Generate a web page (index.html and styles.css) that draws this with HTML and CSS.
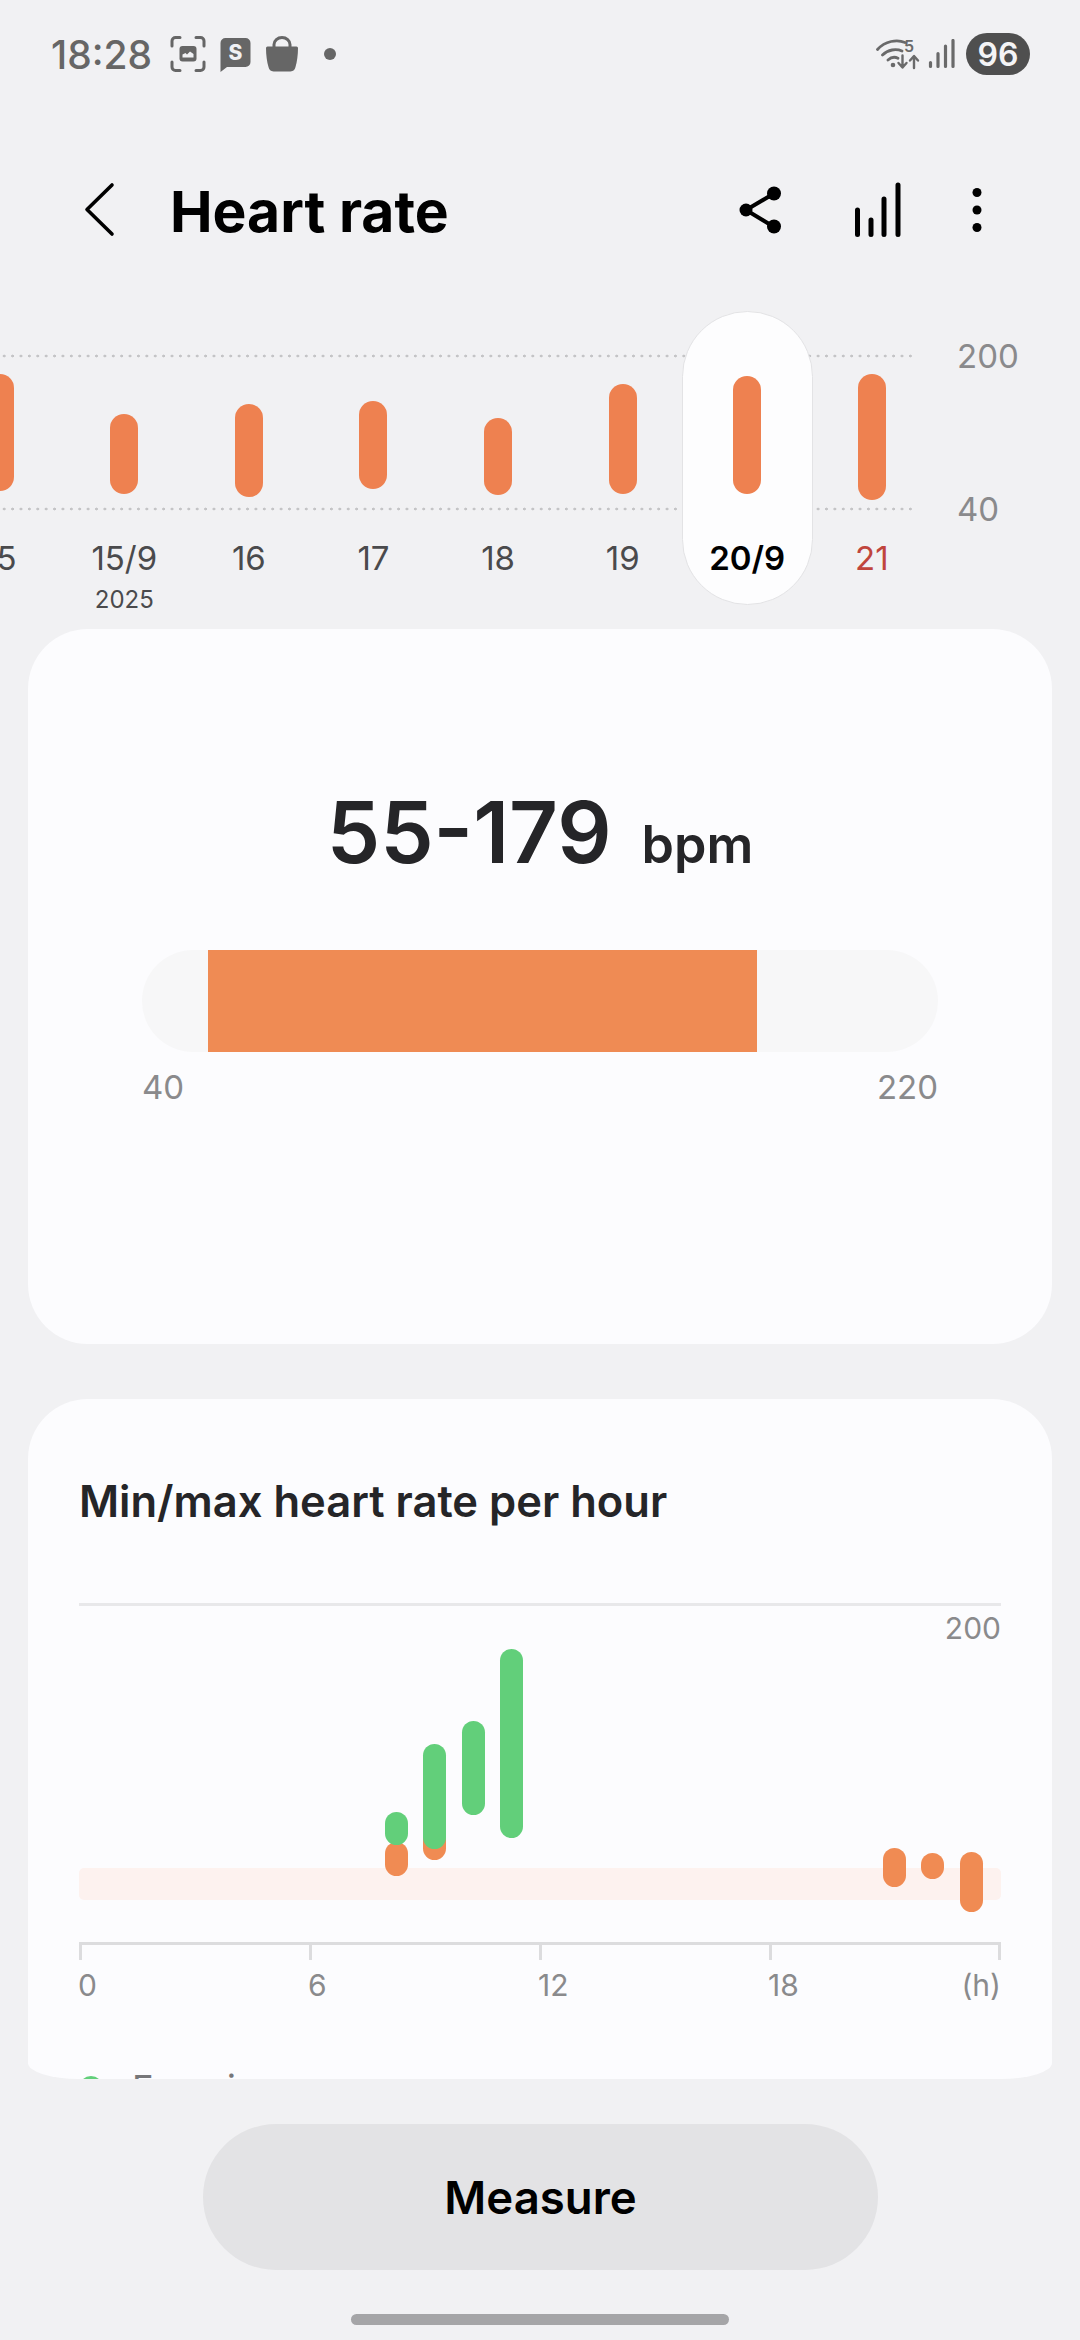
FILE: index.html
```html
<!DOCTYPE html>
<html lang="en">
  <head>
    <meta charset="UTF-8" />
    <meta name="viewport" content="width=device-width, initial-scale=1.0" />
    <title>Heart rate</title>
    <link rel="stylesheet" href="styles.css">
  </head>
  <body>

    <!-- status bar -->
    <div class="status-bar">
      <span class="clock">18:28</span>
      <svg class="st-icon shot" width="36" height="36" viewBox="0 0 36 36">
        <path d="M2 10V5a3.500 3.500 0 0 1 3.500-3.500H10M26 1.500h4.500A3.500 3.500 0 0 1 34 5v5M34 26v5a3.500 3.500 0 0 1-3.500 3.500H26M10 34.500H5.500A3.500 3.500 0 0 1 2 31v-5" fill="none" stroke="#666" stroke-width="3" stroke-linecap="round"/>
        <rect x="9.500" y="10" width="17" height="15.500" rx="3" fill="#666"/>
        <path d="M12.500 21.500v-3l3-1.500 1.500 1.500 3-3 3.500 2.500v3.500z" fill="#f0f1f4"/>
      </svg>
      <svg class="st-icon bubble" width="31" height="35" viewBox="0 0 31 35">
        <path d="M0.500 6a5 5 0 0 1 5-5h20a5 5 0 0 1 5 5v19a5 5 0 0 1-5 5H7l-6.500 5z" fill="#666"/>
        <text x="15.500" y="22.500" text-anchor="middle" class="bubble-s">S</text>
      </svg>
      <svg class="st-icon bag" width="34" height="36" viewBox="0 0 34 36">
        <path d="M9 11V8.500a8 7 0 0 1 16 0V11" fill="none" stroke="#666" stroke-width="3"/>
        <path d="M1 12a1.500 1.500 0 0 1 1.500-1.500h29a1.500 1.500 0 0 1 1.500 1.500c0 7-1 14-2.500 19a5.500 5.500 0 0 1-5 4.500h-17a5.500 5.500 0 0 1-5-4.500C2 26 1 19 1 12z" fill="#666"/>
      </svg>
      <span class="st-dot"></span>

      <svg class="wifi" width="44" height="32" viewBox="0 0 44 32">
        <path d="M1.500 11.500C9 3 21 1 29 4.500M6.500 17C12 11.500 20 10.500 26 13M12 22c3-2.800 7-3.300 10-1.800" fill="none" stroke="#6a6a6a" stroke-width="2.800" stroke-linecap="round"/>
        <circle cx="17" cy="27" r="2.300" fill="#6a6a6a"/>
        <text x="33" y="13.500" text-anchor="middle" class="wifi-5">5</text>
        <path d="M26.500 17.500v11M22.500 25l4 4.500 4-4.500M38 30V19M34 22.500l4-4.500 4 4.500" fill="none" stroke="#6a6a6a" stroke-width="2.400" stroke-linecap="round" stroke-linejoin="round"/>
      </svg>
      <svg class="signal" width="28" height="30" viewBox="0 0 28 30">
        <path d="M2.500 27.500v-4M10 27.500v-13M17.500 27.500V7M25 27.500V1.500" fill="none" stroke="#6a6a6a" stroke-width="3.200" stroke-linecap="round"/>
      </svg>
      <span class="battery">96</span>
    </div>

    <!-- title bar -->
    <div class="top-bar">
      <svg class="back" width="32" height="56" viewBox="0 0 32 56">
        <path d="M28 3 3 27.500 28 52" fill="none" stroke="#000" stroke-width="3.600" stroke-linecap="round" stroke-linejoin="round"/>
      </svg>
      <h1 class="page-title">Heart rate</h1>
      <div class="top-actions">
        <svg width="50" height="50" viewBox="0 0 50 50">
          <path d="M38 8.500 10 25l28 17" fill="none" stroke="#000" stroke-width="4"/>
          <circle cx="38" cy="8.500" r="7"/>
          <circle cx="10" cy="25" r="6.500"/>
          <circle cx="38" cy="41.500" r="7"/>
        </svg>
        <svg width="52" height="56" viewBox="0 0 52 56">
          <path d="M5.500 52.500V28M19 52.500V38M32 52.500V17M46 52.500V3" fill="none" stroke="#000" stroke-width="5" stroke-linecap="round"/>
        </svg>
        <svg width="14" height="50" viewBox="0 0 14 50">
          <circle cx="7" cy="7.500" r="4.500"/>
          <circle cx="7" cy="25" r="4.500"/>
          <circle cx="7" cy="42.500" r="4.500"/>
        </svg>
      </div>
    </div>

    <!-- days strip -->
    <div class="week">
      <div class="grid-line line-max"></div>
      <div class="grid-line line-min"></div>
      <span class="week-axis axis-max">200</span>
      <span class="week-axis axis-min">40</span>

      <div class="days">
        <div class="day">
          <div class="day-plot"><div class="day-bar" style="margin-top:63px;height:117px"></div></div>
          <div class="day-label">15</div>
        </div>
        <div class="day">
          <div class="day-plot"><div class="day-bar" style="margin-top:103px;height:80px"></div></div>
          <div class="day-label">15/9</div>
          <div class="day-year">2025</div>
        </div>
        <div class="day">
          <div class="day-plot"><div class="day-bar" style="margin-top:93px;height:93px"></div></div>
          <div class="day-label">16</div>
        </div>
        <div class="day">
          <div class="day-plot"><div class="day-bar" style="margin-top:90px;height:88px"></div></div>
          <div class="day-label">17</div>
        </div>
        <div class="day">
          <div class="day-plot"><div class="day-bar" style="margin-top:107px;height:77px"></div></div>
          <div class="day-label">18</div>
        </div>
        <div class="day">
          <div class="day-plot"><div class="day-bar" style="margin-top:73px;height:110px"></div></div>
          <div class="day-label">19</div>
        </div>
        <div class="day selected">
          <div class="day-plot"><div class="day-bar" style="margin-top:65px;height:118px"></div></div>
          <div class="day-label">20/9</div>
        </div>
        <div class="day sunday">
          <div class="day-plot"><div class="day-bar" style="margin-top:63px;height:126px"></div></div>
          <div class="day-label">21</div>
        </div>
      </div>
    </div>

    <!-- scrolling cards -->
    <div class="cards">
      <section class="card summary">
        <div class="reading">
          <span class="reading-value">55-179</span>
          <span class="reading-unit">bpm</span>
        </div>
        <div class="range-track">
          <div class="range-fill" style="margin-left:66px;width:549px"></div>
        </div>
        <div class="range-labels">
          <span>40</span>
          <span>220</span>
        </div>
      </section>

      <section class="card hourly">
        <h2 class="card-title">Min/max heart rate per hour</h2>
        <div class="plot">
          <span class="plot-max">200</span>
          <div class="plot-band"></div>
          <span class="h-bar orange" style="left:306px;top:236px;height:34px"></span>
          <span class="h-bar green" style="left:306px;top:206px;height:33px"></span>
          <span class="h-bar orange" style="left:344px;top:218px;height:36px"></span>
          <span class="h-bar green" style="left:344px;top:138px;height:105px"></span>
          <span class="h-bar green" style="left:383px;top:115px;height:94px"></span>
          <span class="h-bar green" style="left:421px;top:43px;height:189px"></span>
          <span class="h-bar orange" style="left:804px;top:242px;height:39px"></span>
          <span class="h-bar orange" style="left:842px;top:247px;height:26px"></span>
          <span class="h-bar orange" style="left:881px;top:246px;height:60px"></span>
        </div>
        <div class="hours">
          <div class="hour"><i class="tick"></i><span>0</span></div>
          <div class="hour"><i class="tick"></i><span>6</span></div>
          <div class="hour"><i class="tick"></i><span>12</span></div>
          <div class="hour"><i class="tick"></i><span>18</span></div>
          <div class="hour last"><i class="tick"></i><span>(h)</span></div>
        </div>
        <div class="legend">
          <span class="legend-dot"></span>
          <span class="legend-text">Exercise</span>
        </div>
      </section>
    </div>

    <button type="button" class="measure">Measure</button>
    <div class="home-bar"></div>

  </body>
</html>
```

FILE: styles.css
```css
/* General */
html,
body {
  margin: 0;
  padding: 0;
}

body {
  width: 1080px;
  height: 2340px;
  overflow: hidden;
  display: flex;
  flex-direction: column;
  font-family: Inter, "Liberation Sans", sans-serif;
  background-color: #f1f1f3;
}

/* Status bar */
.status-bar {
  height: 108px;
  flex: none;
  display: flex;
  align-items: center;
  padding: 0 50px 0 51px;
  box-sizing: border-box;
  color: #666666;
}

.clock {
  font-size: 39px;
  font-weight: 500;
  width: 119px;
}

.st-icon {
  flex: none;
  margin-right: 14px;
}

.bubble-s {
  font-size: 21px;
  font-weight: 800;
  fill: #f0f1f4;
}

.st-dot {
  width: 12px;
  height: 12px;
  margin-left: 11px;
  border-radius: 50%;
  background-color: #666666;
}

.wifi {
  margin-left: auto;
  margin-right: 8px;
}

.wifi-5 {
  font-size: 16px;
  font-weight: 600;
  fill: #6a6a6a;
}

.signal {
  margin-right: 10px;
}

.battery {
  width: 64px;
  height: 42px;
  display: flex;
  align-items: center;
  justify-content: center;
  border-radius: 21px;
  background-color: #4f4f4f;
  color: #f4f4f6;
  font-size: 32px;
  font-weight: 600;
}

/* Title bar */
.top-bar {
  height: 203px;
  flex: none;
  display: flex;
  align-items: center;
  padding: 0 96px 0 84px;
  box-sizing: border-box;
}

.page-title {
  margin: 3px 0 0 54px;
  font-size: 57px;
  font-weight: 700;
  color: #000000;
}

.top-actions {
  margin-left: auto;
  display: flex;
  align-items: center;
  gap: 66px;
}

/* Days strip */
.week {
  position: relative;
  height: 318px;
  flex: none;
  overflow: hidden;
}

.grid-line {
  position: absolute;
  left: 0;
  width: 912px;
  height: 4px;
  background-image: radial-gradient(circle, #c4c4c6 1.2px, transparent 1.7px);
  background-size: 8.4px 4px;
}

.line-max {
  top: 43px;
}

.line-min {
  top: 196px;
}

.week-axis {
  position: absolute;
  left: 957px;
  font-size: 33px;
  line-height: 40px;
  color: #8a8a8c;
}

.axis-max {
  top: 25px;
}

.axis-min {
  top: 178px;
}

.days {
  position: relative;
  display: flex;
  margin-left: -62.6px;
}

.day {
  position: relative;
  width: 124.6px;
  flex: none;
  height: 294px;
  text-align: center;
  color: #4a4a4c;
}

.day-plot {
  position: relative;
  display: flow-root;
  height: 224px;
}

.day-bar {
  width: 28px;
  margin-left: auto;
  margin-right: auto;
  border-radius: 14px;
  background-color: #ee8150;
}

.day-label {
  position: relative;
  font-size: 33px;
  line-height: 46px;
}

.day-year {
  margin-top: 4px;
  font-size: 24px;
  line-height: 30px;
}

.selected::before {
  content: "";
  position: absolute;
  top: 0;
  left: -3.2px;
  width: 131px;
  height: 294px;
  box-sizing: border-box;
  border: 1px solid #e3e3e5;
  border-radius: 66px;
  background-color: #fdfdfe;
}

.selected .day-label {
  font-weight: 600;
  color: #000000;
}

.sunday .day-label {
  color: #c0453c;
}

/* Cards */
.cards {
  height: 1450px;
  flex: none;
  margin: 0 28px;
  overflow: hidden;
  border-radius: 0 0 51px 51px / 0 0 16px 16px;
}

.card {
  border-radius: 60px;
  background-color: #fcfcfe;
}

.summary {
  height: 715px;
  padding: 148px 114px 0;
  box-sizing: border-box;
  margin-bottom: 55px;
}

.reading {
  display: flex;
  align-items: baseline;
  justify-content: center;
  gap: 30px;
  color: #252528;
}

.reading-value {
  font-size: 85px;
  font-weight: 600;
  line-height: 112px;
}

.reading-unit {
  font-size: 52px;
  font-weight: 600;
}

.range-track {
  height: 102px;
  margin-top: 61px;
  border-radius: 51px;
  background-color: #f7f7f8;
  overflow: hidden;
}

.range-fill {
  height: 100%;
  background-color: #ef8b54;
}

.range-labels {
  display: flex;
  justify-content: space-between;
  margin-top: 13px;
  font-size: 33px;
  line-height: 44px;
  color: #8a8a8c;
}

.hourly {
  padding: 75px 51px 0;
  height: 760px;
  box-sizing: border-box;
}

.card-title {
  margin: 0;
  font-size: 43.5px;
  font-weight: 600;
  line-height: 54px;
  color: #252528;
}

.plot {
  position: relative;
  height: 336px;
  margin-top: 75px;
  border-top: 3px solid #e8e8ea;
  border-bottom: 3px solid #dcdcde;
}

.plot-max {
  position: absolute;
  top: 4px;
  right: 0;
  font-size: 30px;
  line-height: 36px;
  color: #8a8a8c;
}

.plot-band {
  position: absolute;
  left: 0;
  right: 0;
  top: 262px;
  height: 32px;
  border-radius: 5px;
  background-color: #fdf2ef;
}

.h-bar {
  position: absolute;
  width: 23px;
  border-radius: 12px;
}

.orange {
  background-color: #f08b53;
}

.green {
  background-color: #62cf7a;
}

.hours {
  display: flex;
}

.hour {
  width: 230px;
  flex: none;
  font-size: 30px;
  line-height: 36px;
  color: #8a8a8c;
}

.hour span {
  margin-left: -1px;
}

.tick {
  display: block;
  width: 3px;
  height: 15px;
  margin-bottom: 7px;
  background-color: #dcdcde;
}

.hour.last {
  width: 62px;
  margin-left: -60px;
  text-align: right;
}

.hour.last .tick {
  margin-left: auto;
}

.legend {
  display: flex;
  align-items: center;
  gap: 29px;
  margin-top: 63px;
  color: #777779;
}

.legend-dot {
  width: 24px;
  height: 24px;
  border-radius: 50%;
  background-color: #62cf7a;
}

.legend-text {
  font-size: 36px;
  line-height: 44px;
}

/* Bottom */
.measure {
  flex: none;
  align-self: flex-start;
  width: 675px;
  height: 146px;
  margin: 45px 0 0 203px;
  border: 0;
  border-radius: 73px;
  background-color: #e3e3e5;
  color: #000000;
  font-family: inherit;
  font-size: 45.5px;
  font-weight: 600;
}

.home-bar {
  flex: none;
  align-self: flex-start;
  width: 378px;
  height: 11px;
  margin: 44px 0 0 351px;
  border-radius: 6px;
  background-color: #a5a5a7;
}
```
